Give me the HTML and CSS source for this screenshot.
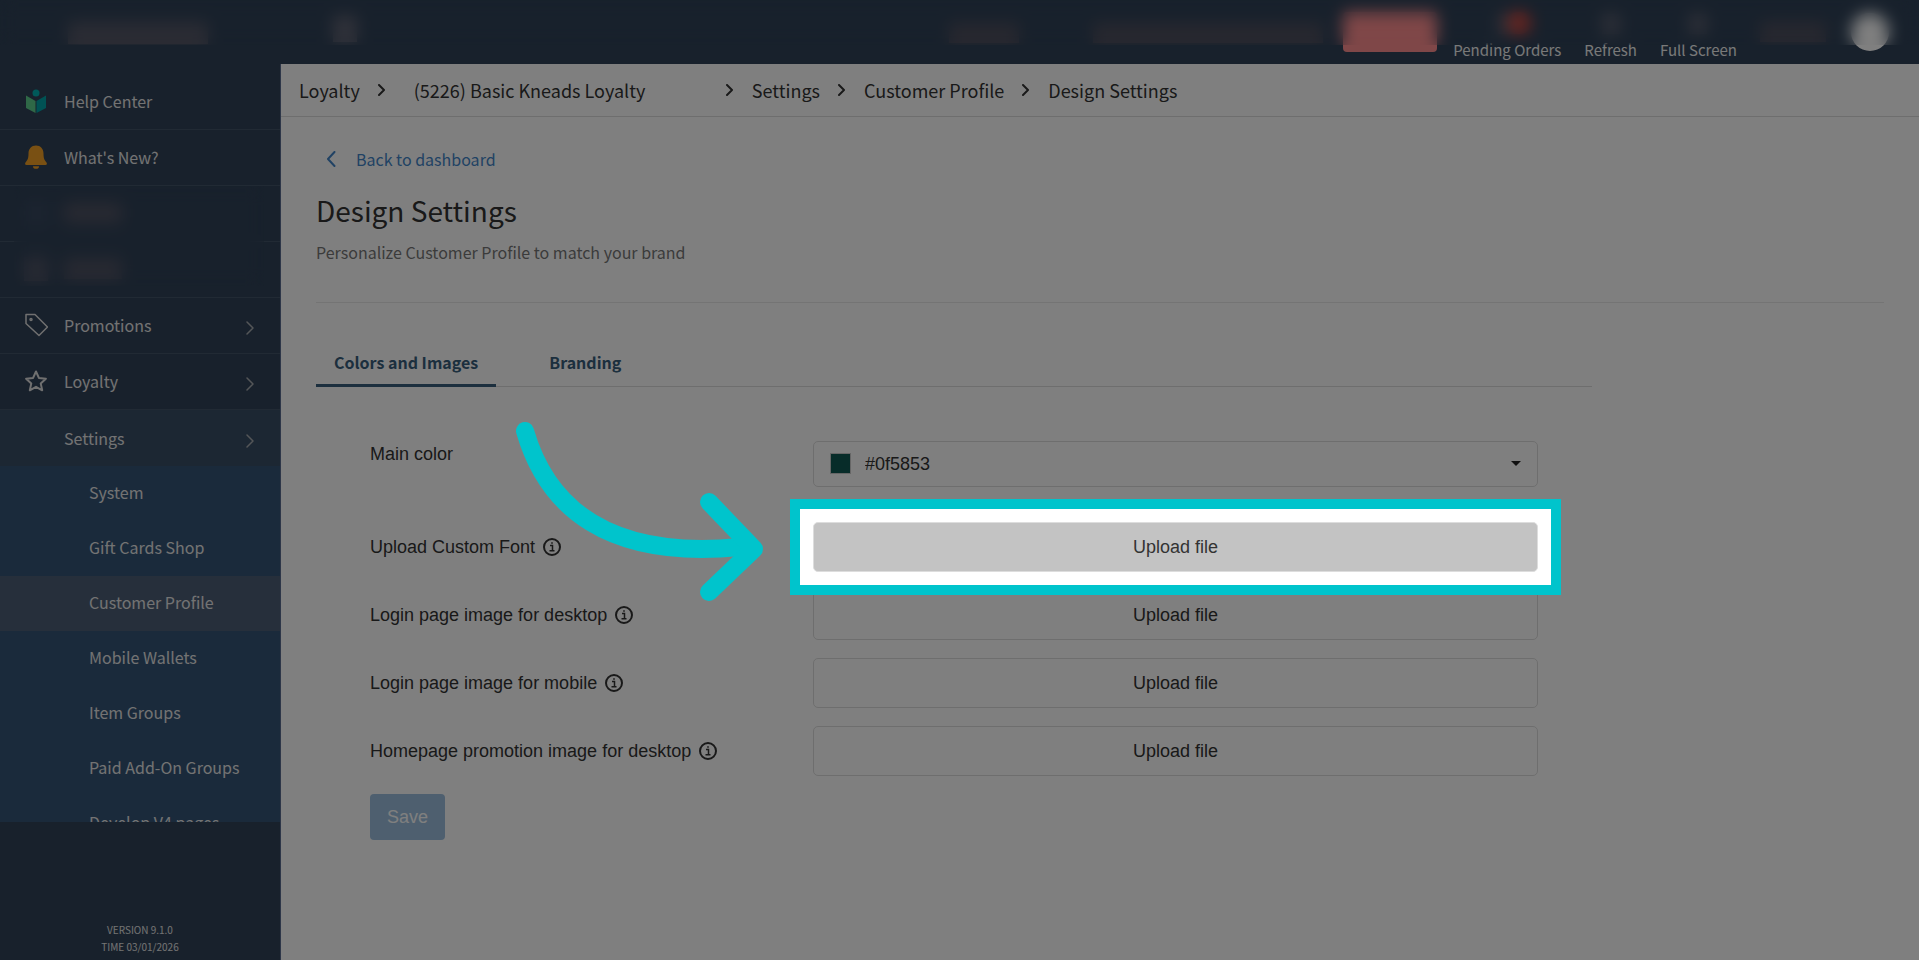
FILE: index.html
```html
<!DOCTYPE html>
<html lang="en">
<head>
    <meta charset="UTF-8">
    <meta name="viewport" content="width=device-width, initial-scale=1.0">
    <title>Design Settings</title>
    <link rel="stylesheet" href="styles.css">
</head>
<body>
    <header class="topbar">
        <div class="brand"></div>
        <div class="menu-toggle"></div>
        <div class="topbar-right">
            <div class="notice short"></div>
            <div class="notice"></div>
            <div class="notice-btn"></div>
            <a class="top-link pending" href="#">Pending Orders</a>
            <a class="top-link" href="#">Refresh</a>
            <a class="top-link" href="#">Full Screen</a>
            <div class="user-name"></div>
            <div class="avatar"></div>
        </div>
        <div class="blur-mask"></div>
    </header>

    <div class="layout">
        <aside class="sidebar">
            <nav class="nav">
                <a class="nav-item" href="#">
                    <svg class="nav-icon" viewBox="0 0 24 24">
                        <circle cx="12" cy="4" r="3.500" fill="#00b3b3"/>
                        <path d="M2 6.500l9.500 5.500v12L2 19z" fill="#5fd08e"/>
                        <path d="M22 6.500l-9.500 5.500v12L22 19z" fill="#00a5a8"/>
                    </svg>
                    Help Center
                </a>
                <a class="nav-item" href="#">
                    <svg class="nav-icon bell" viewBox="0 0 24 24">
                        <path d="M12 0.500c-4.500 0-7.500 3.500-7.500 8 0 6-1.500 7-3 9-.8 1-.4 2.500 1 2.500h19c1.400 0 1.800-1.500 1-2.500-1.500-2-3-3-3-9 0-4.500-3-8-7.500-8z"/>
                        <path d="M9 21.200h6a3 2.600 0 0 1-6 0z"/>
                    </svg>
                    What's New?
                </a>
                <div class="nav-private">
                    <div class="nav-item"><span class="ghost-icon faint"></span><span class="ghost-text"></span></div>
                    <div class="nav-item"><span class="ghost-icon"></span><span class="ghost-text"></span></div>
                    <div class="blur-mask"></div>
                </div>
                <a class="nav-item" href="#">
                    <svg class="nav-icon line" viewBox="0 0 24 24">
                        <path d="M2 1.500h9L23.500 14 15 22.500 2 10.500z"/>
                        <circle cx="7" cy="6.500" r="1"/>
                    </svg>
                    Promotions
                    <svg class="chevron" viewBox="0 0 8 14"><path d="M1 1l6 6-6 6"/></svg>
                </a>
                <a class="nav-item" href="#">
                    <svg class="nav-icon line bold" viewBox="0 0 24 24">
                        <path d="M12 2.500l2.900 6.400 7 .8-5.200 4.700 1.500 6.900-6.200-3.500-6.200 3.500 1.500-6.900L2.100 9.700l7-.8z"/>
                    </svg>
                    Loyalty
                    <svg class="chevron" viewBox="0 0 8 14"><path d="M1 1l6 6-6 6"/></svg>
                </a>
                <a class="nav-item nested" href="#">
                    Settings
                    <svg class="chevron" viewBox="0 0 8 14"><path d="M1 1l6 6-6 6"/></svg>
                </a>
                <div class="subnav">
                    <a href="#">System</a>
                    <a href="#">Gift Cards Shop</a>
                    <a class="active" href="#">Customer Profile</a>
                    <a href="#">Mobile Wallets</a>
                    <a href="#">Item Groups</a>
                    <a href="#">Paid Add-On Groups</a>
                    <a href="#">Develop V4 pages</a>
                </div>
            </nav>
            <div class="version">
                <p>VERSION 9.1.0</p>
                <p>TIME 03/01/2026</p>
            </div>
        </aside>

        <main class="main">
            <div class="breadcrumb">
                <a href="#">Loyalty</a>
                <svg class="sep" viewBox="0 0 8 12"><path d="M1 1l5 5-5 5"/></svg>
                <select aria-label="Loyalty program">
                    <option>(5226) Basic Kneads Loyalty</option>
                </select>
                <svg class="sep" viewBox="0 0 8 12"><path d="M1 1l5 5-5 5"/></svg>
                <a href="#">Settings</a>
                <svg class="sep" viewBox="0 0 8 12"><path d="M1 1l5 5-5 5"/></svg>
                <a href="#">Customer Profile</a>
                <svg class="sep" viewBox="0 0 8 12"><path d="M1 1l5 5-5 5"/></svg>
                <a href="#">Design Settings</a>
            </div>

            <div class="content">
                <div class="page-head">
                    <a class="back-link" href="#">
                        <svg viewBox="0 0 10 16"><path d="M8.500 1L2 8l6.500 7"/></svg>
                        Back to dashboard
                    </a>
                    <h1>Design Settings</h1>
                    <p>Personalize Customer Profile to match your brand</p>
                </div>

                <div class="panel">
                    <div class="tabs">
                        <button class="tab active" type="button">Colors and Images</button>
                        <button class="tab" type="button">Branding</button>
                    </div>

                    <form class="form">
                        <div class="row color-row">
                            <label for="main-color">Main color</label>
                            <div class="color-select">
                                <select id="main-color">
                                    <option>#0f5853</option>
                                </select>
                                <span class="swatch"></span>
                                <span class="caret"></span>
                            </div>
                        </div>
                        <div class="row">
                            <label for="font-file">Upload Custom Font
                                <svg class="info" viewBox="0 0 18 18"><circle cx="9" cy="9" r="8"/><path d="M7 7.500h2.500v5M6.500 12.700h5M8.200 4.900h1.600"/></svg>
                            </label>
                            <div class="spotlight">
                                <button class="upload" id="font-file" type="button">Upload file</button>
                                <svg class="arrow" viewBox="0 0 260 195">
                                    <path d="M15 16C37 92 97 145 230 132"/>
                                    <path d="M199 87l45 47-45 43"/>
                                </svg>
                            </div>
                        </div>
                        <div class="row">
                            <label for="desktop-file">Login page image for desktop
                                <svg class="info" viewBox="0 0 18 18"><circle cx="9" cy="9" r="8"/><path d="M7 7.500h2.500v5M6.500 12.700h5M8.200 4.900h1.600"/></svg>
                            </label>
                            <button class="upload" id="desktop-file" type="button">Upload file</button>
                        </div>
                        <div class="row">
                            <label for="mobile-file">Login page image for mobile
                                <svg class="info" viewBox="0 0 18 18"><circle cx="9" cy="9" r="8"/><path d="M7 7.500h2.500v5M6.500 12.700h5M8.200 4.900h1.600"/></svg>
                            </label>
                            <button class="upload" id="mobile-file" type="button">Upload file</button>
                        </div>
                        <div class="row">
                            <label for="promo-file">Homepage promotion image for desktop
                                <svg class="info" viewBox="0 0 18 18"><circle cx="9" cy="9" r="8"/><path d="M7 7.500h2.500v5M6.500 12.700h5M8.200 4.900h1.600"/></svg>
                            </label>
                            <button class="upload" id="promo-file" type="button">Upload file</button>
                        </div>
                        <button class="save" type="button">Save</button>
                    </form>
                </div>
            </div>
        </main>
    </div>
</body>
</html>
```
FILE: styles.css
```css
* {
    margin: 0;
    padding: 0;
    box-sizing: border-box;
}

body {
    display: flex;
    flex-direction: column;
    height: 100vh;
    overflow: hidden;
    background: #fff;
    color: #333;
    font-family: 'Noto Sans CJK SC', 'Open Sans', sans-serif;
    font-size: 16px;
    line-height: 24px;
}

a {
    color: inherit;
    text-decoration: none;
}

svg {
    flex: none;
    fill: none;
    stroke-linecap: round;
    stroke-linejoin: round;
}

/* Top bar */
.topbar {
    position: relative;
    flex: none;
    display: flex;
    align-items: flex-start;
    height: 64px;
    padding-right: 30px;
    background: #304258;
    color: #f2f2f2;
}

.blur-mask {
    position: absolute;
    top: 0;
    left: 0;
    right: 0;
    height: 45px;
    backdrop-filter: blur(8px);
}

.brand {
    width: 140px;
    height: 22px;
    margin: 22px 0 0 68px;
    background: #565868;
}

.menu-toggle {
    width: 24px;
    height: 26px;
    margin: 16px 0 0 125px;
    background: #626474;
}

.topbar-right {
    display: flex;
    align-items: flex-start;
    margin-left: auto;
}

.notice {
    width: 230px;
    height: 20px;
    margin: 23px 20px 0 0;
    background: #50505f;
}

.notice.short {
    width: 70px;
    margin-right: 74px;
}

.notice-btn {
    width: 94px;
    height: 40px;
    margin: 12px 16px 0 0;
    border-radius: 4px;
    background: #ff8e90;
}

.top-link {
    position: relative;
    margin-right: 23px;
    padding-top: 40px;
    font-size: 15px;
    line-height: 20px;
}

.top-link::before {
    content: '';
    position: absolute;
    top: 14px;
    left: calc(50% - 9px);
    width: 18px;
    height: 20px;
    background: #5c6070;
}

.top-link.pending::after {
    content: '';
    position: absolute;
    top: 12px;
    left: 54px;
    width: 24px;
    height: 22px;
    border-radius: 11px;
    background: #d84a3f;
}

.user-name {
    width: 66px;
    height: 20px;
    margin: 22px 25px 0 0;
    background: #50505f;
}

.avatar {
    width: 38px;
    height: 38px;
    margin-top: 13px;
    border-radius: 50%;
    background: #fff;
}

/* Sidebar */
.layout {
    flex: 1;
    display: flex;
    min-height: 0;
}

.sidebar {
    flex: none;
    display: flex;
    flex-direction: column;
    width: 281px;
    border-right: 1px solid #5a6d90;
    background: #304258;
    color: #e6e6e6;
}

.nav {
    flex: 1;
    min-height: 0;
    padding-top: 10px;
    overflow: hidden;
}

.nav-item {
    display: flex;
    align-items: center;
    height: 56px;
    padding: 0 26px 1px 24px;
    border-bottom: 1px solid #435468;
}

.nav-icon {
    width: 24px;
    height: 24px;
    margin-right: 16px;
}

.nav-icon.bell {
    fill: #f2a026;
}

.nav-icon.line {
    stroke: #e0e0e0;
    stroke-width: 1.5;
}

.nav-icon.bold {
    stroke-width: 2;
}

.chevron {
    width: 8px;
    height: 14px;
    margin: 6px 0 0 auto;
    stroke: #a8acb0;
    stroke-width: 1.5;
}

.nav-private {
    position: relative;
}

.nav-private .blur-mask {
    left: 14px;
    right: 16px;
    height: 100px;
}

.ghost-icon {
    width: 24px;
    height: 24px;
    margin-right: 16px;
    background: #505466;
}

.ghost-icon.faint {
    background: #384860;
}

.ghost-text {
    width: 58px;
    height: 20px;
    background: #525464;
}

.nested {
    padding-left: 64px;
    border-bottom: 0;
    background: #384e66;
}

.subnav a {
    display: flex;
    align-items: center;
    height: 55px;
    padding: 0 0 3px 89px;
    background: #345476;
}

.subnav a.active {
    background: #4c5e76;
}

.version {
    height: 138px;
    padding-top: 99px;
    text-align: center;
    font-size: 10px;
    line-height: 17px;
}

/* Breadcrumb */
.main {
    flex: 1;
    min-width: 0;
}

.breadcrumb {
    display: flex;
    align-items: center;
    gap: 18px;
    height: 53px;
    padding-left: 18px;
    border-bottom: 1px solid #dcdcdc;
    font-size: 18px;
}

.breadcrumb select {
    width: 304px;
    padding-left: 10px;
    border: 0;
    appearance: none;
    background: transparent;
    color: inherit;
    font: inherit;
}

.sep {
    width: 8px;
    height: 12px;
    stroke: #333;
    stroke-width: 2;
}

/* Page head */
.content {
    padding: 30px 35px;
}

.page-head {
    padding-bottom: 38px;
    border-bottom: 1px solid #e8e8e8;
}

.back-link {
    display: flex;
    align-items: center;
    gap: 20px;
    padding-left: 10px;
    color: #4285c8;
}

.back-link svg {
    width: 10px;
    height: 16px;
    stroke: #4285c8;
    stroke-width: 2;
}

.page-head h1 {
    margin: 19px 0 10px;
    font-size: 28px;
    font-weight: 400;
    line-height: 40px;
}

.page-head p {
    color: #777;
}

/* Tabs */
.panel {
    max-width: 1276px;
    margin-top: 36px;
}

.tabs {
    display: flex;
    gap: 35px;
    box-shadow: inset 0 -1px 0 #ddd;
}

.tab {
    padding: 11px 18px 10px;
    border: 0;
    border-bottom: 3px solid transparent;
    background: none;
    color: #385e7c;
    font: inherit;
    font-weight: 700;
}

.tab.active {
    border-bottom-color: #385e7c;
}

/* Form */
.form {
    display: flex;
    flex-direction: column;
    align-items: flex-start;
    gap: 18px;
    padding: 54px;
    font-family: 'Liberation Sans', Arial, sans-serif;
    font-size: 18px;
}

.row {
    display: grid;
    grid-template-columns: 443px 1fr;
    align-items: center;
    width: 100%;
}

.row label {
    display: flex;
    align-items: center;
    gap: 8px;
    line-height: 26px;
}

.color-row {
    align-items: start;
    margin-bottom: 17px;
}

.info {
    width: 18px;
    height: 18px;
    stroke: #333;
    stroke-width: 2;
    stroke-linecap: butt;
    stroke-linejoin: miter;
}

.info path {
    stroke-width: 1.5;
}

.color-select {
    position: relative;
}

.color-select select {
    display: block;
    width: 100%;
    height: 46px;
    padding-left: 51px;
    border: 1px solid #ddd;
    border-radius: 5px;
    appearance: none;
    background: #fff;
    color: #333;
    font: inherit;
}

.swatch {
    position: absolute;
    top: 12px;
    left: 17px;
    width: 21px;
    height: 21px;
    border: 1px solid #ccc;
    background: #0f5853;
}

.caret {
    position: absolute;
    top: 20px;
    right: 17px;
    border: 5px solid transparent;
    border-top-color: #222;
    border-bottom: 0;
}

.upload {
    display: block;
    width: 100%;
    height: 50px;
    border: 1px solid #ddd;
    border-radius: 5px;
    background: #fff;
    color: #333;
    font: inherit;
}

/* Dims everything around the highlighted control */
.spotlight {
    position: relative;
    z-index: 10;
}

.spotlight::after {
    content: '';
    position: absolute;
    inset: -23px;
    border: 10px solid #00c4cc;
    box-shadow: 0 0 0 9999px rgba(0, 0, 0, 0.5);
    pointer-events: none;
}

.spotlight .upload {
    background: #c3c3c3;
}

.arrow {
    position: absolute;
    top: -107px;
    right: calc(100% + 43px);
    z-index: 1;
    width: 260px;
    height: 195px;
    stroke: #00c4cc;
    stroke-width: 18;
}

.save {
    height: 46px;
    padding: 0 17px;
    border: 0;
    border-radius: 4px;
    background: #9cbede;
    color: #fff;
    font: inherit;
}
```
